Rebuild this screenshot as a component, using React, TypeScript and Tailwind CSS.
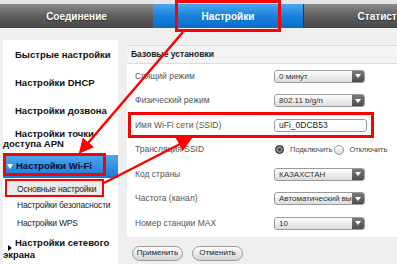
import { useState } from 'react';

const menu = ['Быстрые настройки', 'Настройки DHCP', 'Настройки дозвона'];

function Select({ value }: { value: string }) {
  return (
    <div className="flex h-[13px] w-[91px] items-stretch overflow-hidden rounded-[3px] border border-[#9a9a9a] bg-gradient-to-b from-white to-[#dcdcdc]">
      <span className="flex-1 overflow-hidden whitespace-nowrap pl-[4px] text-[8px] leading-[11px] text-[#333]">{value}</span>
      <span className="flex w-[12px] shrink-0 items-center justify-center bg-gradient-to-b from-[#7a7a7a] to-[#4e4e4e]">
        <span className="h-0 w-0 border-x-[3px] border-t-[4px] border-x-transparent border-t-white" />
      </span>
    </div>
  );
}

function Row({ label, children }: { label: string; children?: React.ReactNode }) {
  return (
    <div className="flex h-[24.5px] items-center">
      <span className="w-[147px] shrink-0 pl-[8px] text-[8.5px] text-[#555]">{label}</span>
      {children}
    </div>
  );
}

export default function App() {
  const [on, setOn] = useState(true);

  return (
    <div className="relative h-[264px] w-[397px] overflow-hidden bg-[#efefef] font-['Liberation_Sans',Arial,sans-serif]">
      {/* Tabs */}
      <div className="bg-[#e6e6e6] pt-[4px]">
        <div className="flex h-[24px] text-[10px] font-bold text-white">
          <div className="flex w-[153px] shrink-0 items-center justify-center bg-gradient-to-b from-[#8c8c8c] via-[#5e5e5e] to-[#474747] [text-shadow:0_1px_1px_rgba(0,0,0,.5)]">
            Соединение
          </div>
          <div className="flex w-[150px] shrink-0 items-center justify-center bg-gradient-to-b from-[#4aa6ee] via-[#1781dc] to-[#0a6cc8]">
            Настройки
          </div>
          <div className="flex w-[164px] shrink-0 items-center justify-center border-l border-[#333] bg-gradient-to-b from-[#8c8c8c] via-[#5e5e5e] to-[#474747] [text-shadow:0_1px_1px_rgba(0,0,0,.5)]">
            Статистика
          </div>
        </div>
      </div>

      <div className="mt-[12px] flex gap-[9px] pl-[3px]">
        {/* Sidebar */}
        <div className="h-[230px] w-[115px] shrink-0 bg-white pt-[1px] text-[9.5px] font-bold text-[#111]">
          {menu.map((m) => (
            <div key={m} className="flex h-[28px] items-center whitespace-nowrap pl-[12px]">{m}</div>
          ))}
          <div className="mt-[4px] indent-[12px] leading-[10px]">Настройки точки доступа APN</div>
          <div className="mt-[6px] flex h-[23px] items-center gap-[3px] bg-gradient-to-b from-[#4ea8ee] to-[#1479d6] pl-[4px] text-[#0b0b3a]">
            <span className="h-0 w-0 border-x-[3px] border-t-[5px] border-x-transparent border-t-white" />
            Настройки Wi-Fi
          </div>
          <div className="mt-[3px] ml-[3px] flex h-[16px] w-[98px] items-center whitespace-nowrap bg-[#ececec] pl-[11px] text-[8.5px] font-normal tracking-[-0.2px] text-[#222]">
            Основные настройки
          </div>
          <div className="flex h-[17px] items-center whitespace-nowrap pl-[14px] text-[8.5px] font-normal tracking-[-0.2px] text-[#222]">Настройки безопасности</div>
          <div className="flex h-[18px] items-center whitespace-nowrap pl-[14px] text-[8.5px] font-normal tracking-[-0.2px] text-[#222]">Настройки WPS</div>
          <div className="relative mt-[5px] indent-[12px] leading-[12px]">
            <span className="absolute left-[5px] top-[8px] h-0 w-0 border-y-[3px] border-l-[4px] border-y-transparent border-l-black" />
            Настройки сетевого экрана
          </div>
        </div>

        {/* Main panel */}
        <div className="min-w-0 flex-1">
          <div className="mt-[5px] border-t border-[#ddd] bg-white">
            <div className="flex h-[18px] items-center border-b border-[#ddd] bg-[#f4f4f4] pl-[4px] text-[8.5px] font-bold text-[#222]">
              Базовые установки
            </div>
            <div className="pb-[1px]">
              <Row label="Спящий режим"><Select value="0 минут" /></Row>
              <Row label="Физический режим"><Select value="802.11 b/g/n" /></Row>
              <Row label="Имя Wi-Fi сети (SSID)">
                <div className="flex h-[13px] w-[93px] items-center rounded-[3px] border border-[#9a9a9a] bg-white pl-[4px] text-[8.5px] text-[#222]">
                  uFi_0DCB53
                </div>
              </Row>
              <Row label="Трансляция SSID">
                <div className="flex items-center pl-[1px] text-[7.5px] text-[#444]">
                  <button onClick={() => setOn(true)} className={`h-[9px] w-[9px] rounded-full border ${on ? 'border-[#333] bg-[#444] ring-[2px] ring-inset ring-[#888]' : 'border-[#999] bg-gradient-to-b from-white to-[#ddd]'}`} />
                  <span className="ml-[6px]">Подключить</span>
                  <button onClick={() => setOn(false)} className={`ml-[2px] h-[10px] w-[10px] rounded-full border ${!on ? 'border-[#333] bg-[#444]' : 'border-[#999] bg-gradient-to-b from-white to-[#ddd]'}`} />
                  <span className="ml-[5px] whitespace-nowrap">Отключить</span>
                </div>
              </Row>
              <Row label="Код страны"><Select value="КАЗАХСТАН" /></Row>
              <Row label="Частота (канал)"><Select value="Автоматический выбор" /></Row>
              <Row label="Номер станции MAX"><Select value="10" /></Row>
            </div>
          </div>
          <div className="mt-[9px] flex gap-[9px] pl-[5px]">
            <button className="h-[15px] w-[51px] rounded-full border border-[#999] bg-gradient-to-b from-white to-[#d4d4d4] text-[8px] text-[#222]">Применить</button>
            <button className="h-[15px] w-[51px] rounded-full border border-[#999] bg-gradient-to-b from-white to-[#d4d4d4] text-[8px] text-[#222]">Отменить</button>
          </div>
        </div>
      </div>

      {/* Annotations */}
      <div className="absolute left-[175px] top-[0px] h-[32px] w-[106px] border-[3px] border-[#f00]" />
      <div className="absolute left-[3px] top-[153px] h-[23px] w-[103px] border-[3px] border-[#f00]" />
      <div className="absolute left-[5px] top-[179px] h-[18px] w-[99px] border-[2.5px] border-[#f00]" />
      <div className="absolute left-[128px] top-[112px] h-[26px] w-[246px] border-[3px] border-[#f00]" />
      <svg className="pointer-events-none absolute inset-0" width="397" height="264">
        <defs>
          <marker id="ah" markerWidth="6" markerHeight="6" refX="4" refY="3" orient="auto" markerUnits="strokeWidth">
            <path d="M0,0 L6,3 L0,6 Z" fill="#f00" />
          </marker>
        </defs>
        <line x1="183" y1="32" x2="82" y2="150" stroke="#f00" strokeWidth="2.5" markerEnd="url(#ah)" />
        <line x1="104" y1="183" x2="188" y2="140" stroke="#f00" strokeWidth="2.5" markerEnd="url(#ah)" />
      </svg>
    </div>
  );
}
